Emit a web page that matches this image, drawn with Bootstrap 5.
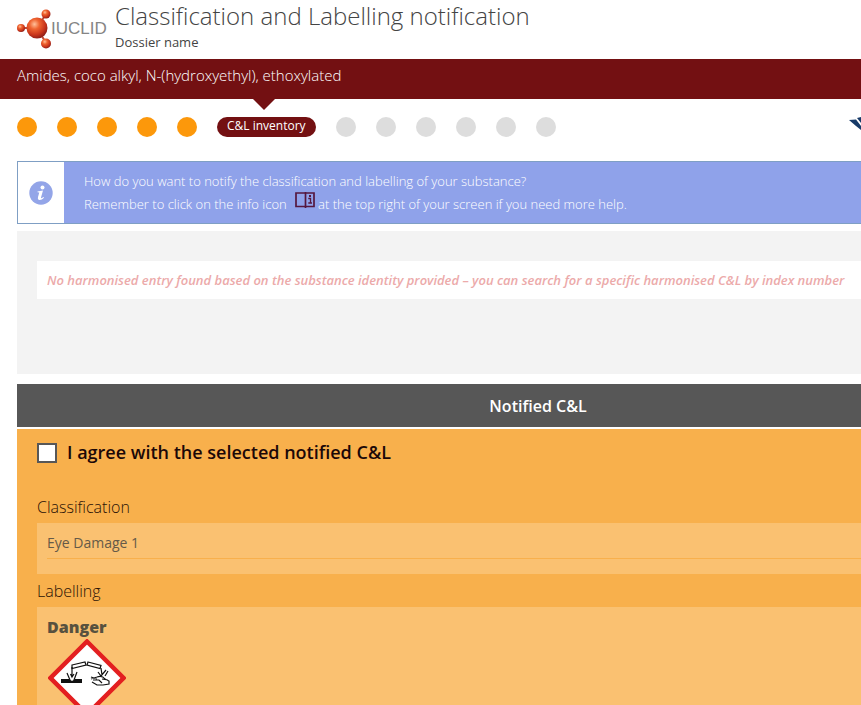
<!DOCTYPE html>
<html lang="en">
<head>
<meta charset="utf-8">
<meta name="viewport" content="width=device-width, initial-scale=1">
<title>Classification and Labelling notification</title>
<link href="https://cdn.jsdelivr.net/npm/bootstrap@5.3.0/dist/css/bootstrap.min.css" rel="stylesheet">
<style>
body { font-family: "Open Sans", "Noto Sans", sans-serif; font-size: 13px; line-height: 20px; color: #444; background: #fff; overflow-x: hidden; }
.top-bar { height: 59px; padding-left: 15px; gap: 8px; }
.brand-logo { width: 92px; height: 56px; }
.page-title { font-size: 24px; line-height: 32px; font-weight: 300; color: #444; }
.substance { background: #731012; color: #fff; height: 40px; padding: 6px 17px; font-size: 15px; font-weight: 300; }
.steps { height: 62px; padding: 18px 0 0 17px; gap: 20px; }
.step-dot { width: 20px; height: 20px; background: #ddd; }
.step-done { background: #fc980b; }
.step-current { height: 20px; line-height: 18px; padding: 0 10px; background: #731012; color: #fff; font-size: 12px; }
.pointer { left: 50%; top: -19px; margin-left: -14px; border: 12px solid transparent; border-bottom: 0; border-top-color: #731012; }
.flag-mark { right: 0; top: 18px; width: 12px; height: 14px; }
.main-area { padding-left: 17px; }
.hint { border: 1px solid #7f9fc4; border-right: 0; background: #8fa2ea; color: #fff; height: 63px; }
.hint-icon { width: 46px; background: #fff; }
.hint-text { padding: 8px 20px; line-height: 23px; font-weight: 350; }
.book { width: 20px; height: 16px; margin: -12px 3px 0 5px; }
.harmonised { background: #f3f3f3; height: 143px; margin-top: 7px; padding: 30px 0 0 20px; }
.no-entry { background: #fff; color: #ecaaaa; height: 38px; padding: 9px 10px; font-weight: 600; font-style: italic; }
.notified-head { background: #575757; color: #fff; height: 43px; margin-top: 10px; padding-left: 198px; font-size: 16px; line-height: 44px; font-weight: 600; }
.notified { background: #f8b04c; margin-top: 2px; padding: 12px 0 0 20px; }
.agree-row { gap: 10px; height: 24px; }
.agree-row .form-check-input { width: 20px; height: 20px; border: 2px solid #575757; border-radius: 0; background-color: #fff; }
.agree-row .form-check-input:checked { background-color: #575757; }
.agree-text { font-size: 18px; line-height: 22px; height: 24px; font-weight: 600; color: #1c0808; }
.field-title { font-size: 16px; line-height: 24px; font-weight: 300; color: #2a1206; }
.field-box { background: #fac171; padding: 10px 0 0 10px; color: #665a48; }
.class-title { margin-top: 30px; }
.class-box { height: 51px; margin-top: 4px; font-size: 14px; }
.class-value { padding-bottom: 5px; border-bottom: 1px solid #f8b04c; }
.label-title { margin-top: 5px; }
.label-box { height: 130px; margin-top: 4px; }
.signal { font-size: 16px; font-weight: 800; color: #57513f; }
.hazard { width: 78px; height: 78px; margin-top: 2px; margin-left: 1px; }
</style>
<script src="https://cdn.jsdelivr.net/npm/bootstrap@5.3.0/dist/js/bootstrap.bundle.min.js"></script>
</head>
<body>
<div class="vh-100 overflow-hidden">
<header class="top-bar d-flex">
  <svg class="brand-logo flex-shrink-0" viewBox="15 0 92 56" role="img" aria-label="IUCLID">
    <defs><radialGradient id="ball" cx=".38" cy=".32" r=".68"><stop offset="0" stop-color="#ffc09a"/><stop offset=".35" stop-color="#ef6430"/><stop offset=".75" stop-color="#c9351b"/><stop offset="1" stop-color="#932018"/></radialGradient></defs>
    <path d="M21 28H37L46 14M37 28L46 43" fill="none" stroke="#bf4a35" stroke-width="2"/>
    <g fill="url(#ball)"><circle cx="37" cy="28" r="10.5"/><circle cx="21" cy="28" r="4"/><circle cx="46" cy="14" r="4.5"/><circle cx="46" cy="43.500" r="5"/></g>
    <text x="51" y="34" font-family="Liberation Sans, Arial, sans-serif" font-size="17" fill="#858585">IUCLID</text>
  </svg>
  <div>
    <h1 class="page-title mb-0 text-nowrap">Classification and Labelling notification</h1>
    <div class="text-nowrap">Dossier name</div>
  </div>
</header>
<div class="substance text-nowrap">Amides, coco alkyl, N-(hydroxyethyl), ethoxylated</div>
<nav class="steps d-flex position-relative" aria-label="Progress">
  <span class="step-dot step-done rounded-circle"></span><span class="step-dot step-done rounded-circle"></span><span class="step-dot step-done rounded-circle"></span><span class="step-dot step-done rounded-circle"></span><span class="step-dot step-done rounded-circle"></span>
  <a href="#" class="step-current rounded-pill position-relative text-decoration-none text-nowrap" aria-current="step">C&amp;L inventory<span class="pointer position-absolute"></span></a>
  <span class="step-dot rounded-circle"></span><span class="step-dot rounded-circle"></span><span class="step-dot rounded-circle"></span><span class="step-dot rounded-circle"></span><span class="step-dot rounded-circle"></span><span class="step-dot rounded-circle"></span>
  <svg class="flag-mark position-absolute" viewBox="0 0 12 14" aria-hidden="true"><path d="M0 3L7 2.500L12 9V13L7 9Z M8 1L12 0V6Z" fill="#173a68"/></svg>
</nav>
<main class="main-area">
  <section class="hint d-flex">
    <div class="hint-icon d-flex align-items-center justify-content-center flex-shrink-0">
      <svg width="24" height="24" viewBox="0 0 24 24" aria-hidden="true"><circle cx="12" cy="12" r="11.700" fill="#93a5e8"/><circle cx="13.500" cy="6.500" r="2" fill="#fff"/><path d="M8.500 10.500Q11 10 14 9.500L12 16.500Q12 18 14.500 16L15 16.700Q12.500 19.500 10 19Q8.300 18.500 9 16L10.300 11.500L8.500 11.300Z" fill="#fff"/></svg>
    </div>
    <div class="hint-text text-nowrap">How do you want to notify the classification and labelling of your substance?<br>Remember to click on the info icon
      <svg class="book" viewBox="0 0 20 16" role="img" aria-label="info"><path d="M1 1H19V14.500H1ZM10.500 0V16" fill="none" stroke="#55173f" stroke-width="1.700"/><path d="M13.300 6.500H15.500V11M13.300 11H17" fill="none" stroke="#55173f" stroke-width="1.300"/><path d="M14 3H16V5H14Z" fill="#55173f"/></svg>at the top right of your screen if you need more help.</div>
  </section>
  <section class="harmonised"><div class="no-entry text-nowrap">No harmonised entry found based on the substance identity provided – you can search for a specific harmonised C&amp;L by index number</div></section>
  <h2 class="notified-head mb-0 text-center">Notified C&amp;L</h2>
  <section class="notified">
    <div class="agree-row d-flex align-items-center">
      <input class="form-check-input m-0 flex-shrink-0" type="checkbox" id="agree"><label class="agree-text" for="agree">I agree with the selected notified C&amp;L</label>
    </div>
    <h3 class="field-title class-title mb-0">Classification</h3>
    <div class="field-box class-box"><div class="class-value">Eye Damage 1</div></div>
    <h3 class="field-title label-title mb-0">Labelling</h3>
    <div class="field-box label-box">
      <div class="signal">Danger</div>
      <svg class="hazard d-block" viewBox="0 0 78 78" role="img" aria-label="Corrosive">
        <path d="M39 2.500L75.500 39L39 75.500L2.500 39Z" fill="#fff" stroke="#e31f20" stroke-width="4.500"/>
        <g fill="#fff" stroke="#111" stroke-width="1.200"><path d="M24 26L37 23L38 26L24 29.500Z"/><path d="M40 23L53 26.500L52 29.500L39 26Z"/></g>
        <path d="M24 28V37M22.500 35L24 38L26 35M19 34L22 41M29 33L26 41M53 29L54 36M50 33L53 37L58 31M60 32L57 37" fill="none" stroke="#111" stroke-width="1.200"/>
        <path d="M13 40H21L24 42L27 40H34V44H13Z" fill="#111"/>
        <path d="M43 40L49 38Q54 36 57 40L61 42V45L55 46H49L44 43M45 41L51 41L54 44M43 38L49 40M54 40L60 41" fill="#fff" stroke="#111" stroke-width="1.200"/>
      </svg>
    </div>
  </section>
</main>
</div>
</body>
</html>
